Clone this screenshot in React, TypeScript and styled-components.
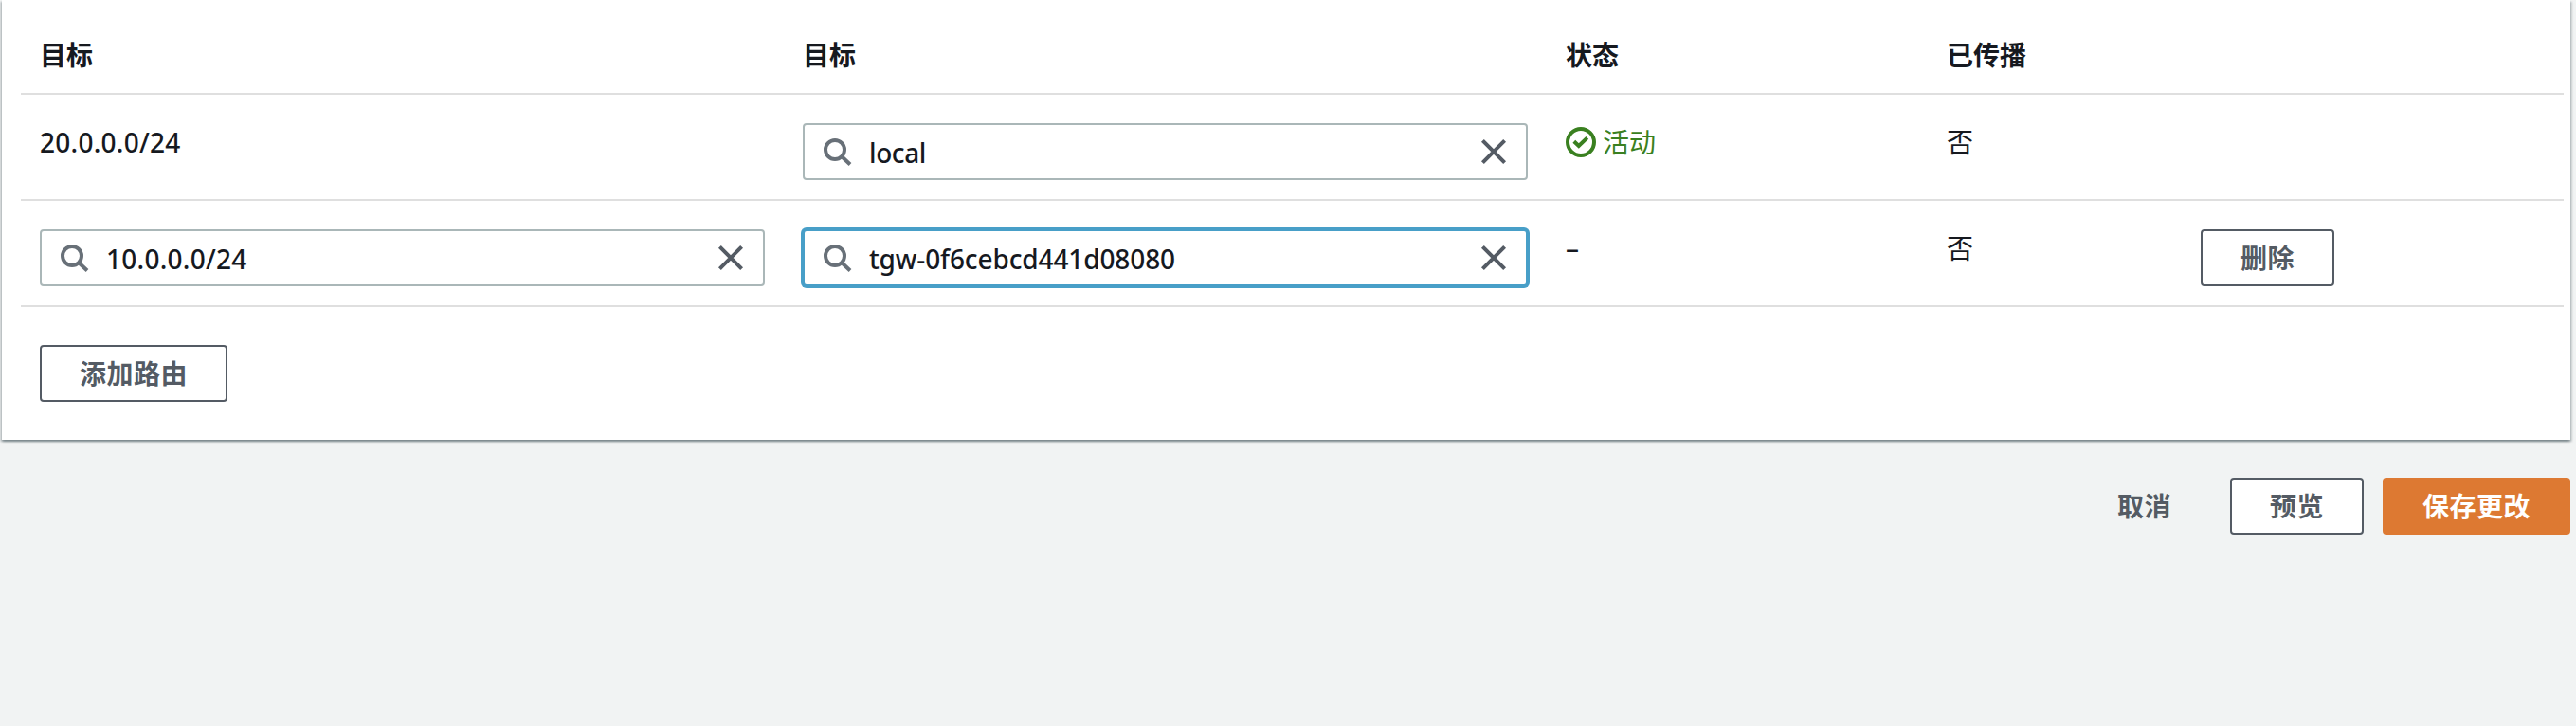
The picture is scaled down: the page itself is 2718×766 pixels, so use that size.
import React from "react";
import styled, { createGlobalStyle, css } from "styled-components";

const GlobalStyle = createGlobalStyle`
  * { box-sizing: border-box; }
  body {
    margin: 0;
    background: #f1f3f3;
    color: #16191f;
    font: 400 28px/44px "Noto Sans", "Noto Sans CJK SC", sans-serif;
  }
`;

const Page = styled.div`
  min-height: 766px;
  padding: 0 6px 0 2px;
  overflow: hidden;
`;

const Panel = styled.section`
  height: 464px;
  padding: 0 7px 40px 20px;
  background: #fff;
  box-shadow:
    0 2px 2px 0 rgba(0, 28, 36, 0.3),
    2px 2px 2px 0 rgba(0, 28, 36, 0.15),
    -2px 2px 2px 0 rgba(0, 28, 36, 0.15);
`;

const Row = styled.div<{ $header?: boolean }>`
  display: grid;
  grid-template-columns: 805px 805px 402px 268px 1fr;
  border-bottom: 2px solid #dfdfdf;
  height: ${(p) => (p.$header ? "100px" : "112px")};
  font-weight: ${(p) => (p.$header ? 700 : 400)};
`;

const HeaderCell = styled.div`
  padding: 36px 20px 0;
`;

const TextCell = styled.div<{ $latin?: boolean }>`
  padding: 28px 20px 0;
  ${(p) =>
    p.$latin &&
    css`
      font-weight: 500;
      letter-spacing: 0.25px;
    `}
`;

const ControlCell = styled.div`
  padding: 30px 20px 0;
`;

const Field = styled.div<{ $focused?: boolean }>`
  display: flex;
  align-items: center;
  height: 60px;
  padding: 0 18px;
  border: 2px solid #aab7b8;
  border-radius: 4px;
  background: #fff;
  ${(p) =>
    p.$focused &&
    css`
      border-color: #489fc8;
      box-shadow: 0 0 0 2px #489fc8;
    `}
`;

const FieldInput = styled.input<{ $tracking: number }>`
  flex: 1;
  min-width: 0;
  height: 46px;
  margin: 0 16px 0 18px;
  padding: 2px 0 0;
  border: 0;
  outline: 0;
  background: none;
  color: inherit;
  font: inherit;
  font-weight: 500;
  letter-spacing: ${(p) => p.$tracking}px;
`;

const Icon = styled.svg`
  flex: none;
  display: block;
  width: 32px;
  height: 32px;
  fill: none;
  stroke: currentColor;
  stroke-width: 4;
`;

const SearchGlyph = styled(Icon)`
  color: #687078;
`;

const ClearGlyph = styled(Icon)`
  color: #545b64;
`;

const Status = styled.div`
  display: flex;
  align-items: center;
  gap: 7px;
  color: #3a8020;
`;

const Button = styled.button<{ $variant?: "normal" | "primary" | "link" }>`
  height: 60px;
  padding: 0 40px;
  border: 2px solid #545b64;
  border-radius: 4px;
  background: #fff;
  color: #545b64;
  font: inherit;
  font-weight: 700;
  letter-spacing: 0.5px;
  white-space: nowrap;
  ${(p) =>
    p.$variant === "primary" &&
    css`
      border-color: #dd7932;
      background: #dd7932;
      color: #fff;
    `}
  ${(p) =>
    p.$variant === "link" &&
    css`
      border-color: transparent;
      background: transparent;
    `}
`;

const TableFooter = styled.div`
  padding: 40px 20px 0;
`;

const Actions = styled.div`
  display: flex;
  justify-content: flex-end;
  gap: 20px;
  padding-top: 40px;
`;

type SearchFieldProps = { value: string; focused?: boolean; tracking?: number };

function SearchField({ value, focused, tracking = 0 }: SearchFieldProps) {
  return (
    <Field $focused={focused}>
      <SearchGlyph viewBox="0 0 32 32">
        <circle cx="14" cy="14" r="10" />
        <path d="M21 21l9 8.5" />
      </SearchGlyph>
      <FieldInput defaultValue={value} $tracking={tracking} />
      <ClearGlyph viewBox="0 0 32 32">
        <path d="M4.4 4.4l23.2 23.2M27.6 4.4L4.4 27.6" />
      </ClearGlyph>
    </Field>
  );
}

export default function App() {
  return (
    <>
      <GlobalStyle />
      <Page>
        <Panel>
          <Row $header>
            <HeaderCell>目标</HeaderCell>
            <HeaderCell>目标</HeaderCell>
            <HeaderCell>状态</HeaderCell>
            <HeaderCell>已传播</HeaderCell>
          </Row>
          <Row>
            <TextCell $latin>20.0.0.0/24</TextCell>
            <ControlCell>
              <SearchField value="local" tracking={-0.4} />
            </ControlCell>
            <TextCell>
              <Status>
                <Icon viewBox="0 0 32 32">
                  <circle cx="16" cy="16" r="14" />
                  <path d="M8.8 15.2l5 4.8 9-8.6" />
                </Icon>
                <span>活动</span>
              </Status>
            </TextCell>
            <TextCell>否</TextCell>
          </Row>
          <Row>
            <ControlCell>
              <SearchField value="10.0.0.0/24" tracking={0.25} />
            </ControlCell>
            <ControlCell>
              <SearchField value="tgw-0f6cebcd441d08080" focused tracking={-0.12} />
            </ControlCell>
            <TextCell $latin>–</TextCell>
            <TextCell>否</TextCell>
            <ControlCell>
              <Button>删除</Button>
            </ControlCell>
          </Row>
          <TableFooter>
            <Button>添加路由</Button>
          </TableFooter>
        </Panel>
        <Actions>
          <Button $variant="link">取消</Button>
          <Button>预览</Button>
          <Button $variant="primary">保存更改</Button>
        </Actions>
      </Page>
    </>
  );
}
